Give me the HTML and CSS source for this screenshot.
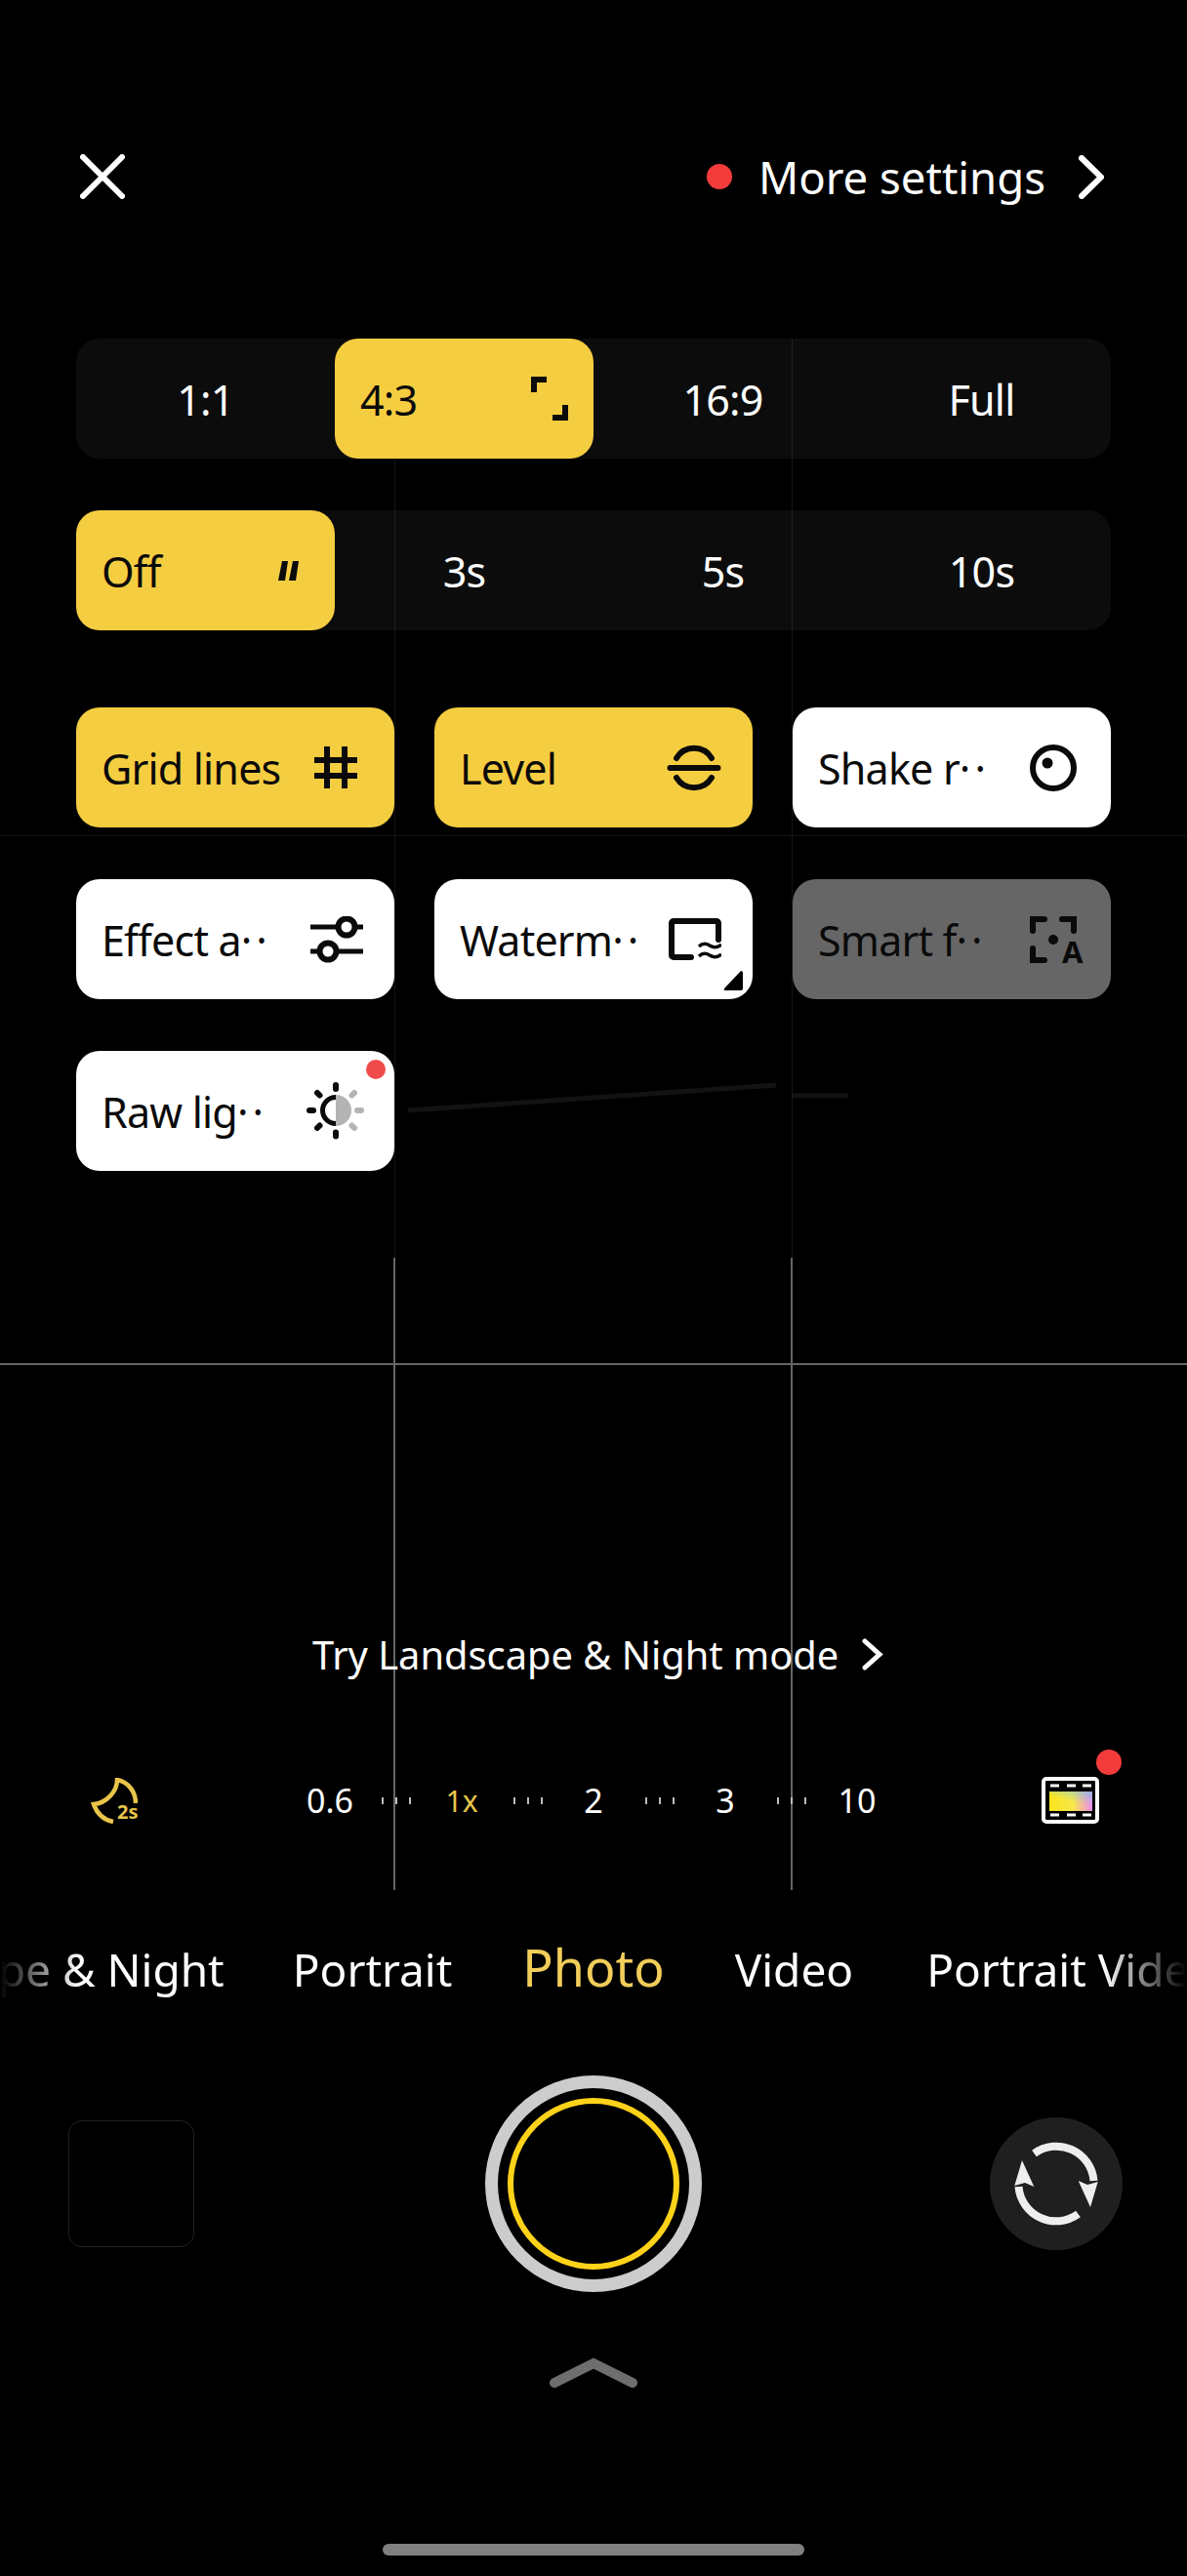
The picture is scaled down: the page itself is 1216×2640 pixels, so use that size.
FILE: index.html
```html
<!DOCTYPE html>
<html lang="en">

<head>
    <meta charset="UTF-8">
    <meta name="viewport" content="width=device-width, initial-scale=1.0">
    <title>Camera settings</title>
    <link rel="stylesheet" href="styles.css">
</head>

<body>
    <div class="screen">
        <!-- viewfinder grid, sits behind everything -->
        <svg class="viewfinder" width="1216" height="2640" viewBox="0 0 1216 2640">
            <path class="line-faint" d="M404.5 347V1289M811.5 347V1289M0 856.5H1216" />
            <path class="line-faint thick" d="M418 1138L795 1112M812 1123H869" />
            <path class="line-bright" d="M404 1289V1937M811 1289V1937M0 1398H1216" />
        </svg>

        <div class="settings">
            <div class="top-bar">
                <svg class="close" width="46" height="46" viewBox="0 0 46 46">
                    <path d="M3 3L43 43M43 3L3 43" />
                </svg>
                <div class="more">
                    <span class="more-dot"></span>
                    <span class="more-label">More settings</span>
                    <svg class="chevron" width="26" height="45" viewBox="0 0 26 45">
                        <path d="M3 3L23 22.500L3 42" />
                    </svg>
                </div>
            </div>

            <div class="segments first">
                <div class="segment">1:1</div>
                <div class="segment active">
                    <span>4:3</span>
                    <svg class="glyph" width="38" height="45" viewBox="0 0 38 45">
                        <path class="sharp" d="M3 16V3H16M22 42H35V29" />
                    </svg>
                </div>
                <div class="segment">16:9</div>
                <div class="segment">Full</div>
            </div>

            <div class="segments second">
                <div class="segment active">
                    <span>Off</span>
                    <svg class="glyph timer-off" width="21" height="20" viewBox="0 0 21 20">
                        <path class="solid" d="M4 0H10L7 20H0ZM15 0H21L18 20H11Z" />
                    </svg>
                </div>
                <div class="segment">3s</div>
                <div class="segment">5s</div>
                <div class="segment">10s</div>
            </div>

            <div class="tiles">
                <div class="tile active">
                    <span class="tile-label">Grid lines</span>
                    <svg class="glyph grid-icon" width="44" height="43" viewBox="0 0 44 43">
                        <path class="sharp" d="M13 0V43M31 0V43M0 14H44M0 30H44" />
                    </svg>
                </div>
                <div class="tile active">
                    <span class="tile-label">Level</span>
                    <svg class="glyph" width="56" height="48" viewBox="0 0 56 48">
                        <path d="M3.500 24H52.500" />
                        <path d="M10 14A21 21 0 0 1 46 14M10 34A21 21 0 0 0 46 34" />
                    </svg>
                </div>
                <div class="tile">
                    <span class="tile-label">Shake r<span class="more-dots">··</span></span>
                    <svg class="glyph shake-icon" width="48" height="48" viewBox="0 0 48 48">
                        <circle cx="24" cy="24" r="21" />
                        <circle class="solid" cx="18" cy="19" r="5.500" />
                    </svg>
                </div>
                <div class="tile">
                    <span class="tile-label">Effect a<span class="more-dots">··</span></span>
                    <svg class="glyph" width="54" height="48" viewBox="0 0 54 48">
                        <path class="thin" d="M0 11H54M0 36H54" />
                        <circle class="knob" cx="37" cy="11" r="8.500" />
                        <circle class="knob" cx="18" cy="36" r="8.500" />
                    </svg>
                </div>
                <div class="tile">
                    <span class="tile-label">Waterm<span class="more-dots">··</span></span>
                    <svg class="glyph" width="54" height="43" viewBox="0 0 54 43">
                        <path d="M23 40H5A2 2 0 0 1 3 38V5A2 2 0 0 1 5 3H49A2 2 0 0 1 51 5V22" />
                        <path class="wave" d="M31 29Q36 24 42 28T54 27M31 39Q36 34 42 38T54 37" />
                    </svg>
                    <svg class="tile-corner" width="20" height="20" viewBox="0 0 20 20">
                        <path class="solid" d="M18 0Q20 0 20 2V18Q20 20 18 20H2Q0 20 1 18Z" />
                    </svg>
                </div>
                <div class="tile disabled">
                    <span class="tile-label">Smart f<span class="more-dots">··</span></span>
                    <svg class="glyph" width="56" height="48" viewBox="0 0 56 48">
                        <path d="M3 15V3H15M33 3H45V15M3 33V45H15" />
                        <circle class="solid" cx="24" cy="24" r="5" />
                        <text class="smart-a" x="33" y="48">A</text>
                    </svg>
                </div>
                <div class="tile">
                    <span class="tile-label">Raw lig<span class="more-dots">··</span></span>
                    <svg class="glyph sun-icon" width="59" height="59" viewBox="0 0 59 59">
                        <path class="solid grey" d="M30 13A16 16 0 0 1 30 45Z" />
                        <path class="ring" d="M30 15.500A13.500 13.500 0 0 0 30 42.500" />
                        <path class="ray" d="M30 3V7M30 51.500V55.500M3 29H7M11 11L13.500 13.500M11 47L13.500 44.500" />
                        <path class="ray grey" d="M52 29H56M49 11L46.500 13.500M49 47L46.500 44.500" />
                    </svg>
                    <span class="tile-badge"></span>
                </div>
            </div>
        </div>

        <div class="hint">
            <span>Try Landscape &amp; Night mode</span>
            <svg class="chevron" width="22" height="33" viewBox="0 0 22 33">
                <path d="M3 3L18 16.500L3 30" />
            </svg>
        </div>

        <div class="zoom-row">
            <svg class="night" width="48" height="47" viewBox="0 0 48 47">
                <path d="M46 26C46 14 38 4 27 2C27 14 16 26 3 27C6 36 13 43 23 45" />
                <text x="27" y="42">2s</text>
            </svg>
            <div class="zoom-scale">
                <span class="zoom-stop">0.6</span>
                <span class="ticks"><i></i><i></i><i></i></span>
                <span class="zoom-stop current">1x</span>
                <span class="ticks"><i></i><i></i><i></i></span>
                <span class="zoom-stop">2</span>
                <span class="ticks"><i></i><i></i><i></i></span>
                <span class="zoom-stop">3</span>
                <span class="ticks"><i></i><i></i><i></i></span>
                <span class="zoom-stop">10</span>
            </div>
            <div class="film">
                <svg width="59" height="48" viewBox="0 0 59 48">
                    <defs>
                        <linearGradient id="filmBase" x1="0" y1="0.6" x2="1" y2="0.6">
                            <stop offset="0" stop-color="#fbe31c" />
                            <stop offset="0.55" stop-color="#f8e84a" />
                            <stop offset="1" stop-color="#f08af2" />
                        </linearGradient>
                        <linearGradient id="filmTop" x1="1" y1="0" x2="0.65" y2="0.6">
                            <stop offset="0" stop-color="#6cc4ec" stop-opacity="0.65" />
                            <stop offset="1" stop-color="#6cc4ec" stop-opacity="0" />
                        </linearGradient>
                    </defs>
                    <rect class="film-frame" x="2" y="2" width="55" height="44" rx="3" />
                    <path class="film-holes" d="M9 9H18M26 9H35M42 9H51M9 39H18M26 39H35M42 39H51" />
                    <rect x="8" y="15" width="44" height="20" fill="url(#filmBase)" />
                    <rect x="8" y="15" width="44" height="20" fill="url(#filmTop)" />
                </svg>
                <span class="film-badge"></span>
            </div>
        </div>

        <div class="modes">
            <div class="modes-side left">
                <span>Landscape &amp; Night</span>
                <span>Portrait</span>
            </div>
            <span class="mode-current">Photo</span>
            <div class="modes-side right">
                <span>Video</span>
                <span>Portrait Video</span>
            </div>
        </div>

        <div class="controls">
            <div class="gallery"></div>
            <div class="shutter">
                <div class="shutter-inner"></div>
            </div>
            <div class="flip">
                <svg width="136" height="136" viewBox="0 0 136 136">
                    <g>
                        <path class="flip-arc" d="M45.500 37A38.500 38.500 0 0 1 106.500 65" />
                        <path class="flip-head" d="M90.700 65L100 69L110.700 66L103 92Z" />
                    </g>
                    <g transform="rotate(180 68 68)">
                        <path class="flip-arc" d="M45.500 37A38.500 38.500 0 0 1 106.500 65" />
                        <path class="flip-head" d="M90.700 65L100 69L110.700 66L103 92Z" />
                    </g>
                </svg>
            </div>
        </div>

        <svg class="drawer-handle" width="90" height="31" viewBox="0 0 90 31">
            <path d="M5 26L45 6L85 26" />
        </svg>

        <div class="home-bar"></div>
    </div>
</body>

</html>
```

FILE: styles.css
```css
* {
    box-sizing: border-box;
}

body {
    margin: 0;
    background-color: #000;
    font-family: "Noto Sans", sans-serif;
    color: #fff;
}

.screen {
    position: relative;
    width: 1216px;
    height: 2640px;
    overflow: hidden;
    display: flex;
    flex-direction: column;
    background-color: #000;
}

.viewfinder {
    position: absolute;
    top: 0;
    left: 0;
    fill: none;
}

.line-faint {
    stroke: #151515;
    stroke-width: 1;
}

.line-faint.thick {
    stroke: #121212;
    stroke-width: 5;
}

.line-bright {
    stroke: #666;
    stroke-width: 2;
}

.settings {
    position: relative;
    padding: 135px 78px 0;
    font-size: 43px;
    letter-spacing: -0.8px;
}

.top-bar {
    height: 92px;
    display: flex;
    align-items: center;
    justify-content: space-between;
    padding: 0 7px 0 4px;
}

.close path,
.chevron path {
    fill: none;
    stroke: #fff;
    stroke-width: 6;
    stroke-linecap: round;
}

.more {
    display: flex;
    align-items: center;
}

.more-dot {
    width: 26px;
    height: 26px;
    border-radius: 50%;
    background-color: #f43b3b;
    margin-right: 27px;
}

.more-label {
    margin-right: 34px;
    font-size: 45.500px;
    letter-spacing: 0;
}

.segments {
    display: grid;
    grid-template-columns: repeat(4, 1fr);
    height: 123px;
    border-radius: 24px;
    background-color: rgba(255, 255, 255, 0.047);
}

.segments.first {
    margin-top: 120px;
}

.segments.second {
    margin-top: 53px;
}

.segment {
    display: flex;
    align-items: center;
    justify-content: center;
    padding-top: 2px;
}

.segment.active {
    justify-content: space-between;
    padding: 0 26px;
    border-radius: 24px;
    background-color: #f5cd41;
    color: #0a0a0a;
}

.segment.active span {
    padding-top: 2px;
}

.timer-off {
    margin-right: 11px;
}

.tiles {
    display: grid;
    grid-template-columns: repeat(3, 326px);
    grid-auto-rows: 123px;
    gap: 53px 41px;
    margin-top: 79px;
}

.tile {
    position: relative;
    display: flex;
    align-items: center;
    justify-content: space-between;
    padding: 0 32px 0 26px;
    border-radius: 24px;
    background-color: #fff;
    color: #0a0a0a;
}

.tile.active {
    background-color: #f5cd41;
}

.tile.disabled {
    background-color: #666;
    padding-right: 27px;
}

.tile-label {
    padding-top: 2px;
    white-space: nowrap;
}

.more-dots {
    letter-spacing: 4px;
}

.glyph {
    flex: none;
    fill: none;
    stroke: #0a0a0a;
    stroke-width: 6;
    stroke-linecap: round;
}

.grid-icon {
    margin-right: 6px;
}

.shake-icon {
    margin-right: 3px;
}

.sun-icon {
    margin-right: -1px;
}

.glyph .sharp {
    stroke-linecap: butt;
}

.glyph .solid {
    fill: #0a0a0a;
    stroke: none;
}

.glyph .solid.grey {
    fill: #b4b4b4;
}

.glyph .thin {
    stroke-width: 5;
    stroke-linecap: butt;
}

.glyph .knob {
    fill: #fff;
}

.glyph .wave {
    stroke-width: 3.500;
    stroke-linecap: butt;
}

.glyph .ring {
    stroke-width: 5;
    stroke-linecap: butt;
}

.glyph .ray {
    stroke-width: 6;
}

.glyph .ray.grey {
    stroke: #b4b4b4;
}

.smart-a {
    font-size: 31px;
    font-weight: 700;
    letter-spacing: 0;
    fill: #0a0a0a;
    stroke: none;
}

.tile-corner {
    position: absolute;
    right: 10px;
    bottom: 9px;
}

.tile-badge {
    position: absolute;
    top: 9px;
    right: 9px;
    width: 20px;
    height: 20px;
    border-radius: 50%;
    background-color: #f04b4b;
}

.hint {
    position: relative;
    display: flex;
    align-items: center;
    justify-content: flex-start;
    height: 60px;
    margin-top: 465px;
    padding-left: 320px;
    font-size: 39.800px;
}

.hint .chevron {
    margin-left: 24px;
}

.hint .chevron path {
    stroke-width: 5;
}

.zoom-row {
    position: relative;
    display: flex;
    align-items: center;
    height: 60px;
    margin-top: 90px;
    padding: 0 90px 0 93px;
}

.night {
    flex: none;
}

.night path {
    fill: none;
    stroke: #e8c54a;
    stroke-width: 4.500;
}

.night text {
    font-size: 20px;
    font-weight: 700;
    fill: #e8c54a;
}

.zoom-scale {
    display: flex;
    align-items: center;
    margin-left: 162px;
    font-size: 34px;
}

.zoom-stop {
    width: 70px;
    text-align: center;
}

.zoom-stop.current {
    font-size: 30px;
    color: #e8c54a;
}

.ticks {
    display: flex;
    justify-content: center;
    gap: 12px;
    width: 65px;
}

.ticks i {
    width: 2px;
    height: 7px;
    background-color: #bbb;
}

.film {
    position: relative;
    margin-left: auto;
    line-height: 0;
}

.film-frame {
    fill: #000;
    stroke: #fff;
    stroke-width: 4;
}

.film-holes {
    fill: none;
    stroke: #fff;
    stroke-width: 3;
}

.film-badge {
    position: absolute;
    top: -28px;
    right: -23px;
    width: 26px;
    height: 26px;
    border-radius: 50%;
    background-color: #f43b3b;
}

.modes {
    position: relative;
    display: grid;
    grid-template-columns: 1fr auto 1fr;
    align-items: baseline;
    column-gap: 72px;
    height: 70px;
    margin-top: 105px;
    font-size: 46px;
    -webkit-mask-image: linear-gradient(to right, transparent 0, #000 80px, #000 1130px, transparent 1216px);
    mask-image: linear-gradient(to right, transparent 0, #000 80px, #000 1130px, transparent 1216px);
}

.modes-side {
    display: flex;
    gap: 75px;
    min-width: 0;
    white-space: nowrap;
    overflow: hidden;
}

.modes-side.left {
    gap: 70px;
    justify-content: flex-end;
}

.mode-current {
    font-size: 52px;
    color: #f2cd5a;
}

.controls {
    display: grid;
    grid-template-columns: 1fr auto 1fr;
    align-items: center;
    margin-top: 77px;
    padding: 0 66px;
}

.gallery {
    width: 129px;
    height: 130px;
    margin-left: 4px;
    border: 1px solid #222;
    border-radius: 14px;
}

.shutter {
    display: flex;
    align-items: center;
    justify-content: center;
    width: 222px;
    height: 222px;
    border: 13px solid #ccc;
    border-radius: 50%;
}

.shutter-inner {
    width: 176px;
    height: 176px;
    border: 6px solid #ffd21a;
    border-radius: 50%;
}

.flip {
    justify-self: end;
    width: 136px;
    height: 136px;
    border-radius: 50%;
    background-color: #1f1f1f;
}

.flip-arc {
    fill: none;
    stroke: #eee;
    stroke-width: 8;
}

.flip-head {
    fill: #eee;
}

.drawer-handle {
    align-self: center;
    margin-top: 67px;
}

.drawer-handle path {
    fill: none;
    stroke: #6e6e6e;
    stroke-width: 10;
    stroke-linecap: round;
    stroke-linejoin: miter;
}

.home-bar {
    align-self: center;
    flex: none;
    width: 432px;
    height: 12px;
    margin-top: 160px;
    border-radius: 6px;
    background-color: #808080;
}
```
